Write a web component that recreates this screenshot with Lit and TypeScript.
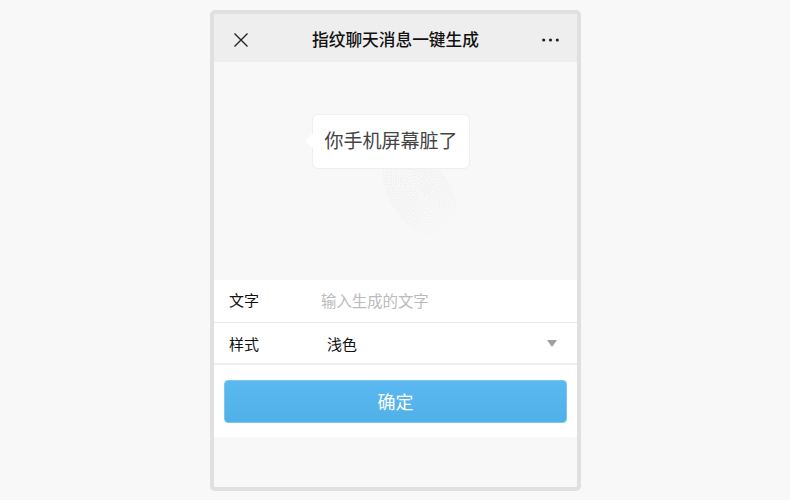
import { LitElement, html, css, svg } from "lit";
import { customElement } from "lit/decorators.js";

const ridges = Array.from({ length: 15 }, (_, i) => {
  const rx = 2 + i * 1.95;
  const ry = 3 + i * 3.3;
  return svg`<ellipse cx="36" cy="53" rx="${rx}" ry="${ry}" stroke-dasharray="${1 + (i % 2)} 1.2" />`;
});

@customElement("app-root")
export class AppRoot extends LitElement {
  static styles = css`
    :host {
      display: block;
      width: 790px;
      height: 500px;
      box-sizing: border-box;
      padding: 10px 0 0 210px;
      background: #f8f8f8;
      font-family: "Liberation Sans", "Noto Sans CJK SC", sans-serif;
      overflow: hidden;
    }
    .phone {
      width: 371px;
      height: 481px;
      box-sizing: border-box;
      border: 4px solid #e0e0e0;
      border-radius: 5px;
      display: flex;
      flex-direction: column;
      background: #f8f8f8;
    }
    .nav {
      height: 48px;
      box-sizing: border-box;
      flex: none;
      background: #eeeeee;
      display: flex;
      align-items: center;
      justify-content: space-between;
      padding: 4px 18px 0 19px;
      position: relative;
    }
    .nav svg { display: block; }
    .title {
      position: absolute;
      left: 0;
      right: 0;
      margin-top: -2px;
      text-align: center;
      font-size: 16.7px;
      font-weight: 500;
      color: #111;
      pointer-events: none;
    }
    .preview {
      height: 218px;
      flex: none;
      position: relative;
    }
    .print {
      position: absolute;
      left: 170px;
      top: 78px;
      transform: rotate(-33deg);
      fill: none;
      stroke-width: 1;
    }
    .bubble {
      position: absolute;
      left: 98px;
      top: 52px;
      width: 158px;
      height: 55px;
      box-sizing: border-box;
      padding-bottom: 5px;
      background: #fff;
      border: 1px solid #efefef;
      border-radius: 6px;
      display: flex;
      align-items: center;
      justify-content: center;
      font-size: 19px;
      color: #444;
    }
    .bubble::before {
      content: "";
      position: absolute;
      left: -6px;
      top: 21px;
      width: 10px;
      height: 10px;
      background: #fff;
      transform: rotate(45deg);
    }
    .bubble span { position: relative; }
    .form { background: #fff; flex: none; }
    .row {
      height: 43px;
      box-sizing: border-box;
      padding: 0 20px 3px 15px;
      border-bottom: 1px solid #e8e8e8;
      display: flex;
      align-items: center;
      font-size: 15px;
      color: #111;
    }
    .row + .row { height: 42px; padding: 1px 20px 0 15px; border-bottom: 2px solid #eeeeee; }
    .label { width: 92px; flex: none; }
    .placeholder { color: #bbbbbb; font-size: 15.4px; }
    .value { flex: 1; padding-left: 6px; }
    .caret {
      width: 0;
      height: 0;
      border-left: 5px solid transparent;
      border-right: 5px solid transparent;
      border-top: 7px solid #a0a0a0;
    }
    .actions {
      background: #fff;
      flex: none;
      padding: 15px 10px 14px;
    }
    .btn {
      height: 43px;
      box-sizing: border-box;
      padding-bottom: 2px;
      border: 1px solid #7cc6f0;
      border-radius: 4px;
      background: linear-gradient(#5ab9f0, #50b0e8);
      color: #fff;
      font-size: 18px;
      display: flex;
      align-items: center;
      justify-content: center;
    }
  `;

  render() {
    return html`
      <div class="phone">
        <div class="nav">
          <svg width="16" height="16" viewBox="0 0 16 16" fill="none" stroke="#222" stroke-width="1.4">
            <path d="M1.5 1.5 14.5 14.5M14.5 1.5 1.5 14.5" />
          </svg>
          <div class="title">指纹聊天消息一键生成</div>
          <svg width="17" height="4" viewBox="0 0 17 4" fill="#222">
            <circle cx="1.7" cy="2" r="1.6" /><circle cx="8.5" cy="2" r="1.6" /><circle cx="15.3" cy="2" r="1.6" />
          </svg>
        </div>
        <div class="preview">
          <svg class="print" width="72" height="106" viewBox="0 0 72 106" stroke="url(#fade)">
            <defs>
              <linearGradient id="fade" gradientUnits="userSpaceOnUse" x1="36" y1="0" x2="36" y2="106">
                <stop offset="0" stop-color="#e9e9e9" />
                <stop offset="0.6" stop-color="#eeeeee" />
                <stop offset="1" stop-color="#f8f8f8" />
              </linearGradient>
            </defs>
            ${ridges}
          </svg>
          <div class="bubble"><span>你手机屏幕脏了</span></div>
        </div>
        <div class="form">
          <div class="row"><div class="label">文字</div><div class="placeholder">输入生成的文字</div></div>
          <div class="row"><div class="label">样式</div><div class="value">浅色</div><div class="caret"></div></div>
        </div>
        <div class="actions"><div class="btn">确定</div></div>
      </div>
    `;
  }
}
